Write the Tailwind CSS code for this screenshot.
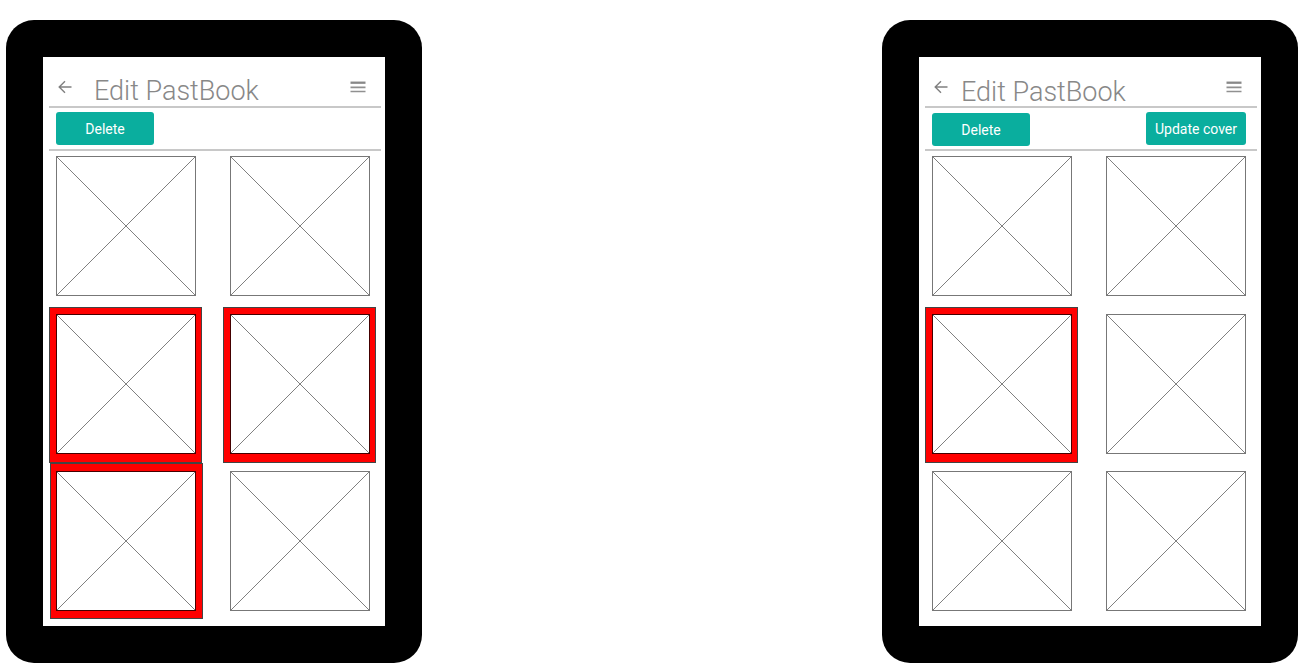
<!DOCTYPE html>
<html lang="en">
<head>
<meta charset="utf-8">
<meta name="viewport" content="width=device-width, initial-scale=1">
<title>Edit PastBook</title>
<script src="https://cdn.jsdelivr.net/npm/@tailwindcss/browser@4"></script>
</head>
<body class="bg-white font-['Roboto',sans-serif]">
<svg class="hidden" aria-hidden="true">
  <symbol id="cross" viewBox="0 0 138 138" preserveAspectRatio="none"><path d="M0 0 138 138M138 0 0 138" fill="none" stroke="#808080" stroke-width="1"/></symbol>
  <symbol id="back" viewBox="0 0 14 14"><path d="M13.500 7H1.500M7 1.200 1.200 7 7 12.800" fill="none" stroke="#808080" stroke-width="1.400"/></symbol>
  <symbol id="menu" viewBox="0 0 16 12"><path d="M0.500 1.700H15.500" stroke="#888" stroke-width="2.300"/><path d="M0.500 6.400H15.500M0.500 10.500H15.500" stroke="#909090" stroke-width="1.700"/></symbol>
</svg>
<main class="flex flex-wrap items-start justify-between gap-y-5 pt-5 pr-[7px] pl-1.5">

  <section aria-label="Several photos selected" class="w-[416px] rounded-[28px] bg-black p-[37px]">
    <div class="bg-white pb-[15px]">
      <header class="mr-1 ml-1.5 flex h-[51px] items-start border-b-2 border-[#c8c8c8] pr-[15px] pl-[9px]">
        <button type="button" aria-label="Back" class="mt-[23px]"><svg class="size-[14px]"><use href="#back"/></svg></button>
        <h1 class="mt-[18px] ml-[22px] grow text-[27px] leading-8 font-light text-[#888]">Edit PastBook</h1>
        <button type="button" aria-label="Menu" class="mt-6"><svg class="h-3 w-4"><use href="#menu"/></svg></button>
      </header>
      <div class="mr-1 ml-1.5 flex h-[43px] items-start justify-between border-b-2 border-[#c8c8c8] px-[7px] pt-1">
        <button type="button" class="h-[33px] w-[98px] rounded-[3px] bg-[#0aae9e] text-sm text-white">Delete</button>
      </div>
      <div class="mt-[5px] grid grid-cols-2 grid-rows-[141px_140px_140px] items-start gap-x-[34px] gap-y-[17px] pr-[15px] pl-[13px]">
        <button type="button" aria-label="Photo 1" aria-pressed="false" class="aspect-square border border-[#777]"><svg class="size-full"><use href="#cross"/></svg></button>
        <button type="button" aria-label="Photo 2" aria-pressed="false" class="aspect-square border border-[#777]"><svg class="size-full"><use href="#cross"/></svg></button>
        <button type="button" aria-label="Photo 3" aria-pressed="true" class="relative aspect-square border border-[#400] before:absolute before:-top-2 before:-right-[7px] before:-bottom-[10px] before:-left-2 before:border-t-7 before:border-r-6 before:border-b-9 before:border-l-7 before:border-[#f00] before:outline before:-outline-offset-1 before:outline-[#444]"><svg class="size-full"><use href="#cross"/></svg></button>
        <button type="button" aria-label="Photo 4" aria-pressed="true" class="relative aspect-square border border-[#400] before:absolute before:-top-2 before:-right-[7px] before:-bottom-[10px] before:-left-2 before:border-t-7 before:border-r-6 before:border-b-9 before:border-l-7 before:border-[#f00] before:outline before:-outline-offset-1 before:outline-[#444]"><svg class="size-full"><use href="#cross"/></svg></button>
        <button type="button" aria-label="Photo 5" aria-pressed="true" class="relative aspect-square border border-[#400] before:absolute before:-top-[9px] before:-right-2 before:-bottom-[9px] before:-left-[7px] before:border-t-8 before:border-r-7 before:border-b-8 before:border-l-6 before:border-[#f00] before:outline before:-outline-offset-1 before:outline-[#444]"><svg class="size-full"><use href="#cross"/></svg></button>
        <button type="button" aria-label="Photo 6" aria-pressed="false" class="aspect-square border border-[#777]"><svg class="size-full"><use href="#cross"/></svg></button>
      </div>
    </div>
  </section>

  <section aria-label="One photo selected" class="w-[416px] rounded-[28px] bg-black p-[37px]">
    <div class="bg-white pb-[15px]">
      <header class="mr-1 ml-1.5 flex h-[51px] items-start border-b-2 border-[#c8c8c8] pr-[15px] pl-[9px]">
        <button type="button" aria-label="Back" class="mt-[23px]"><svg class="size-[14px]"><use href="#back"/></svg></button>
        <h1 class="mt-[19px] ml-[13px] grow text-[27px] leading-8 font-light text-[#888]">Edit PastBook</h1>
        <button type="button" aria-label="Menu" class="mt-6"><svg class="h-3 w-4"><use href="#menu"/></svg></button>
      </header>
      <div class="mr-1 ml-1.5 flex h-[43px] items-start justify-between border-b-2 border-[#c8c8c8] pt-1 pr-[11px] pl-[7px]">
        <button type="button" class="mt-px h-[33px] w-[98px] rounded-[3px] bg-[#0aae9e] text-sm text-white">Delete</button>
        <button type="button" class="h-[33px] w-[100px] rounded-[3px] bg-[#0aae9e] text-sm text-white">Update cover</button>
      </div>
      <div class="mt-[5px] grid grid-cols-2 grid-rows-[141px_140px_140px] items-start gap-x-[34px] gap-y-[17px] pr-[15px] pl-[13px]">
        <button type="button" aria-label="Photo 1" aria-pressed="false" class="aspect-square border border-[#777]"><svg class="size-full"><use href="#cross"/></svg></button>
        <button type="button" aria-label="Photo 2" aria-pressed="false" class="aspect-square border border-[#777]"><svg class="size-full"><use href="#cross"/></svg></button>
        <button type="button" aria-label="Photo 3" aria-pressed="true" class="relative aspect-square border border-[#400] before:absolute before:-top-2 before:-right-[7px] before:-bottom-[10px] before:-left-2 before:border-t-7 before:border-r-6 before:border-b-9 before:border-l-7 before:border-[#f00] before:outline before:-outline-offset-1 before:outline-[#444]"><svg class="size-full"><use href="#cross"/></svg></button>
        <button type="button" aria-label="Photo 4" aria-pressed="false" class="aspect-square border border-[#777]"><svg class="size-full"><use href="#cross"/></svg></button>
        <button type="button" aria-label="Photo 5" aria-pressed="false" class="aspect-square border border-[#777]"><svg class="size-full"><use href="#cross"/></svg></button>
        <button type="button" aria-label="Photo 6" aria-pressed="false" class="aspect-square border border-[#777]"><svg class="size-full"><use href="#cross"/></svg></button>
      </div>
    </div>
  </section>

</main>
</body>
</html>
